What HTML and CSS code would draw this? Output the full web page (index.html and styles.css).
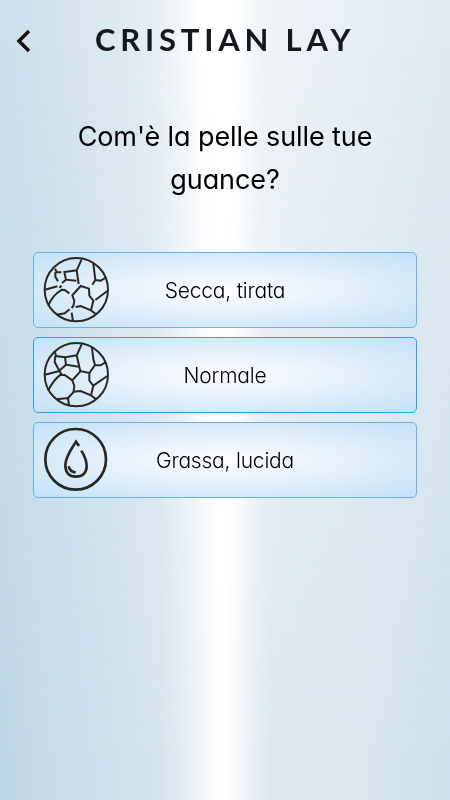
FILE: index.html
```
<!DOCTYPE html>
<html lang="it">
<head>
    <meta charset="UTF-8">
    <meta name="viewport" content="width=device-width, initial-scale=1.0">
    <title>Cristian Lay</title>
    <link rel="stylesheet" href="styles.css">
</head>
<body>
    <header class="header">
        <a href="#" class="back" aria-label="Indietro">
            <svg width="16" height="24" viewBox="0 0 16 24">
                <path d="M14 2 L4 12 L14 22"/>
            </svg>
        </a>
        <div class="logo">CRISTIAN LAY</div>
    </header>

    <main class="content">
        <h1 class="question">Com'è la pelle sulle tue guance?</h1>

        <div class="options">
            <button type="button" class="option">
                <svg class="icon" viewBox="36 24 204 204">
                    <circle cx="139" cy="125" r="95"/>
                    <path d="M155 34 L140 67 L103 72 L108 95 L139 98 M140 67 L146 108 M108 95 L96 105"/>
                    <path d="M75 62 L80 72 L94 73 M76 72 L76 86 L84 100"/>
                    <path d="M190 47 L196 96 L212 98 L226 90 M196 96 L187 110"/>
                    <path d="M45 125 L82 115 M54 173 C66 150 74 138 96 125 L104 126 L118 136"/>
                    <path d="M125 180 L130 174 L133 159 L127 142 L152 114 L177 122 L178 143 L190 158 L183 187 L198 199"/>
                    <path d="M137 177 L152 174 L183 187 M196 156 L232 129"/>
                    <path d="M80 200 L104 196 L119 184 M125 194 L129 220 M88 119 L95 113"/>
                </svg>
                <span class="label">Secca, tirata</span>
            </button>
            <button type="button" class="option option-mid">
                <svg class="icon" viewBox="36 24 204 204">
                    <circle cx="139" cy="125" r="95"/>
                    <path d="M155 34 L140 67 L105 73 L108 95 L146 101 M140 67 L151 115 M108 95 L88 113"/>
                    <path d="M75 58 L78 69 L105 73 M76 69 L74 87 L88 113 L95 125"/>
                    <path d="M186 45 L190 78 L195 96 L212 97 L226 88 M195 96 L178 120"/>
                    <path d="M45 125 L88 114 M54 173 C66 150 74 138 92 125 L104 126 L127 142"/>
                    <path d="M114 195 L130 178 L133 159 L127 142 L152 114 L178 120 L178 143 L190 158 L183 187 L198 199"/>
                    <path d="M130 176 L152 174 L183 187 M190 158 L232 129"/>
                    <path d="M80 199 L114 195 L117 218"/>
                </svg>
                <span class="label">Normale</span>
            </button>
            <button type="button" class="option">
                <svg class="icon" viewBox="36 24 204 204">
                    <circle class="thick" cx="137" cy="124" r="91"/>
                    <path class="thick" d="M147 84 L138 71 C126 91 106 115 106 142 C106 164 118 176 138 176 C158 176 170 164 170 144 C170 126 162 111 154 98"/>
                    <path class="thick" d="M116 145 C118 156 125 162 137 163"/>
                </svg>
                <span class="label">Grassa, lucida</span>
            </button>
        </div>
    </main>
</body>
</html>
```
FILE: styles.css
```
* {
    box-sizing: border-box;
}
body {
    margin: 0;
    min-height: 100vh;
    font-family: Inter, sans-serif;
    font-feature-settings: "cv11";
    color: #000;
    background: linear-gradient(to right, #ccdfeb 0%, #dae8f0 23%, #e5eef5 34%, #f3f7fa 40%, #fff 45%, #fff 52.5%, #f1f5f8 58%, #ebf1f6 67%, #e7eef6 82%, #deeaf1 100%);
}
/* darker sheen that comes in towards the bottom */
body::before {
    content: "";
    position: fixed;
    inset: 0;
    z-index: -1;
    background: linear-gradient(to right, #bcd6e5 0%, #cbdeea 18%, #d5e5ed 36%, #e6eef6 42%, #f6f8fc 46%, #fff 48.5%, #fff 50.5%, #e8eff6 56%, #dbe8f0 60%, #d8e6ee 80%, #cee1ec 100%);
    -webkit-mask-image: linear-gradient(to bottom, transparent 5%, #000 95%);
    mask-image: linear-gradient(to bottom, transparent 5%, #000 95%);
}
.header {
    display: flex;
    align-items: center;
    height: 80px;
    padding-left: 15px;
}
.back {
    display: flex;
    width: 16px;
    padding-top: 1px;
}
.back path {
    fill: none;
    stroke: #160f10;
    stroke-width: 3.5;
}
.logo {
    padding: 0 0 2px 64px;
    font-family: Lato, sans-serif;
    font-size: 31px;
    font-weight: 700;
    line-height: 40px;
    letter-spacing: 4.8px;
    white-space: nowrap;
    color: #15191d;
}
.content {
    padding: 35px 33px 0;
}
.question {
    margin: 0 auto;
    width: 330px;
    font-size: 27px;
    font-weight: 400;
    line-height: 43px;
    letter-spacing: -0.1px;
    text-align: center;
}
.options {
    display: flex;
    flex-direction: column;
    gap: 9px;
    margin-top: 51px;
}
.option {
    display: grid;
    grid-template-columns: 76px 1fr 76px;
    align-items: center;
    height: 76px;
    padding: 0;
    border: 1px solid #62b3ef;
    border-radius: 5px;
    background: radial-gradient(ellipse farthest-corner, #fcfcff 0%, #f2f7fe 22%, #e2f0fb 48%, #d3e8f7 74%, #c3e1fa 100%);
    font: inherit;
    color: #000;
}
.option-mid {
    border-color: #2ba3e8;
}
.icon {
    width: 68px;
    height: 68px;
    margin-left: 8px;
    fill: none;
    stroke: #292724;
    stroke-width: 6;
}
.icon .thick {
    stroke-width: 8;
}
.label {
    font-size: 21px;
    font-weight: 300;
    letter-spacing: -0.2px;
    text-align: center;
}
```
